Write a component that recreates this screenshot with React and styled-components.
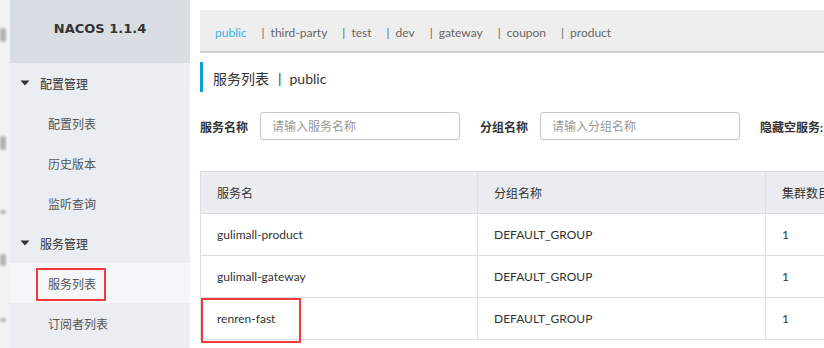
import React from 'react';
import styled, { createGlobalStyle } from 'styled-components';

const GlobalStyle = createGlobalStyle`
  html, body {
    margin: 0;
    padding: 0;
    background: #fff;
  }
  body {
    font-family: "Lato", "Noto Sans CJK SC", sans-serif;
    font-size: 12px;
    color: #333;
  }
`;

const namespaces = ['public', 'third-party', 'test', 'dev', 'gateway', 'coupon', 'product'];

const services = [
  { name: 'gulimall-product', group: 'DEFAULT_GROUP', clusters: 1 },
  { name: 'gulimall-gateway', group: 'DEFAULT_GROUP', clusters: 1 },
  { name: 'renren-fast', group: 'DEFAULT_GROUP', clusters: 1, marked: true },
];

const menu = [
  { title: '配置管理', items: ['配置列表', '历史版本', '监听查询'] },
  { title: '服务管理', items: ['服务列表', '订阅者列表'], active: '服务列表' },
];

// blurred bits of the window lying behind, on the far left edge
const smudges = [
  { top: 28, h: 14 },
  { top: 136, h: 14 },
  { top: 210, h: 4 },
  { top: 254, h: 12 },
  { top: 318, h: 4 },
];

const Caret = () => (
  <svg width="10" height="6" viewBox="0 0 10 6">
    <path d="M0.5 0.5 L9.5 0.5 L5 5.5 Z" fill="#333" />
  </svg>
);

const App = () => {
  return (
    <>
      <GlobalStyle />
      <Page>
        <EdgeStrip>
          {smudges.map((s) => (
            <Smudge key={s.top} style={{ top: s.top, height: s.h }} />
          ))}
        </EdgeStrip>
        <Sidebar>
          <Brand>NACOS 1.1.4</Brand>
          {menu.map((group) => (
            <Group key={group.title}>
              <GroupTitle>
                <Caret />
                {group.title}
              </GroupTitle>
              {group.items.map((item) => (
                <MenuItem key={item} active={item === group.active}>
                  {item === group.active ? <Marked>{item}</Marked> : item}
                </MenuItem>
              ))}
            </Group>
          ))}
        </Sidebar>
        <Main>
          <NsBar>
            {namespaces.map((ns, i) => (
              <Ns key={ns} current={i === 0}>
                {i > 0 && <Sep>|</Sep>}
                {ns}
              </Ns>
            ))}
          </NsBar>
          <Title>
            服务列表<TitleSep>|</TitleSep>public
          </Title>
          <Filters>
            <Field>
              <Label>服务名称</Label>
              <Input placeholder="请输入服务名称" />
            </Field>
            <Field>
              <Label>分组名称</Label>
              <Input placeholder="请输入分组名称" />
            </Field>
            <Field>
              <Label>隐藏空服务:</Label>
            </Field>
          </Filters>
          <Table>
            <HeadRow>
              <HeadCell>服务名</HeadCell>
              <HeadCell>分组名称</HeadCell>
              <HeadCell>集群数目</HeadCell>
            </HeadRow>
            {services.map((s) => (
              <Row key={s.name}>
                <Cell>
                  {s.name}
                  {s.marked && <CellMark />}
                </Cell>
                <Cell>{s.group}</Cell>
                <Cell>{s.clusters}</Cell>
              </Row>
            ))}
          </Table>
        </Main>
      </Page>
    </>
  );
};

export default App;

const Page = styled.div`
  display: flex;
  width: 824px;
  height: 348px;
  overflow: hidden;
`;

const EdgeStrip = styled.div`
  position: relative;
  width: 10px;
  flex-shrink: 0;
  background: #f1f2f2;
  overflow: hidden;
`;

const Smudge = styled.div`
  position: absolute;
  left: 0;
  width: 6px;
  background: #a4a7a7;
  border-radius: 2px;
  filter: blur(1px);
  opacity: 0.8;
`;

const Sidebar = styled.div`
  width: 180px;
  flex-shrink: 0;
  background: #eaedf1;
`;

const Brand = styled.div`
  height: 63px;
  display: flex;
  align-items: center;
  justify-content: center;
  background: #d9dee4;
  font-family: "DejaVu Sans", sans-serif;
  font-weight: bold;
  font-size: 13px;
  color: #333;
  padding-bottom: 6px;
  box-sizing: border-box;
`;

const Group = styled.div`
  display: flex;
  flex-direction: column;
`;

const GroupTitle = styled.div`
  height: 40px;
  display: flex;
  align-items: center;
  gap: 10px;
  padding-left: 10px;
  font-size: 12px;
  color: #333;
`;

const MenuItem = styled.div`
  height: 40px;
  display: flex;
  align-items: center;
  padding-left: 38px;
  font-size: 12px;
  color: #555;
  background: ${(p) => (p.active ? '#f4f6f8' : 'transparent')};
`;

const Marked = styled.span`
  position: relative;
  &::after {
    content: '';
    position: absolute;
    left: -12px;
    top: -7px;
    width: 66px;
    height: 29px;
    border: 2px solid #f23a3c;
  }
`;

const Main = styled.div`
  flex: 1;
  min-width: 0;
  padding: 10px 0 0 10px;
  overflow: hidden;
`;

const NsBar = styled.div`
  height: 43px;
  display: flex;
  align-items: center;
  gap: 15px;
  padding: 3px 0 0 15px;
  box-sizing: border-box;
  background: #eeeeee;
  border-bottom: 2px solid #cfcfcf;
`;

const Ns = styled.span`
  font-size: 12px;
  color: ${(p) => (p.current ? '#33b5e5' : '#666')};
`;

const Sep = styled.span`
  color: #666;
  margin-right: 6px;
`;

const Title = styled.div`
  margin-top: 9px;
  height: 30px;
  display: flex;
  align-items: center;
  padding: 2px 0 0 10px;
  box-sizing: border-box;
  border-left: 3px solid #0aa0d5;
  font-size: 14px;
  color: #333;
`;

const TitleSep = styled.span`
  margin: 0 8px 0 9px;
`;

const Filters = styled.div`
  margin-top: 20px;
  display: flex;
  align-items: center;
  gap: 20px;
  white-space: nowrap;
`;

const Field = styled.div`
  display: flex;
  align-items: center;
  gap: 12px;
`;

const Label = styled.span`
  font-size: 12px;
  font-weight: bold;
  color: #333;
`;

const Input = styled.input`
  width: 200px;
  height: 28px;
  box-sizing: border-box;
  border: 1px solid #c4c6cf;
  border-radius: 3px;
  padding: 0 11px;
  font-family: inherit;
  font-size: 12px;
  outline: none;
  &::placeholder {
    color: #999;
  }
`;

const Table = styled.div`
  margin-top: 31px;
  width: 680px;
  border-left: 1px solid #dcdee3;
  border-top: 1px solid #dcdee3;
`;

const HeadRow = styled.div`
  display: grid;
  grid-template-columns: 277px 288px 1fr;
  height: 42px;
  background: #ebecf0;
  border-bottom: 1px solid #dcdee3;
  box-sizing: border-box;
`;

const Row = styled(HeadRow)`
  background: #fff;
`;

const HeadCell = styled.div`
  display: flex;
  align-items: center;
  padding-left: 16px;
  border-right: 1px solid #dcdee3;
  font-size: 12px;
  color: #333;
`;

const Cell = styled(HeadCell)`
  position: relative;
`;

const CellMark = styled.div`
  position: absolute;
  left: 0;
  top: 0;
  width: 100px;
  height: 45px;
  box-sizing: border-box;
  border: 2px solid #f23a3c;
`;
